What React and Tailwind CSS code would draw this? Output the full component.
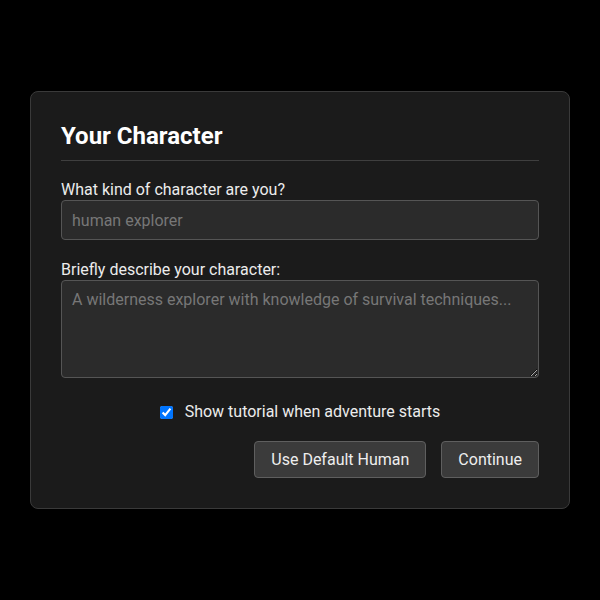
import React, { useState } from 'react';

const App = () => {
  const [tipo, setTipo] = useState('');
  const [descricao, setDescricao] = useState('');
  const [tutorial, setTutorial] = useState(true);

  return (
    <div
      className="min-h-screen bg-black flex items-center justify-center"
      style={{ fontFamily: 'Roboto, "Liberation Sans", sans-serif' }}
    >
      <div className="w-[540px] bg-[#1b1b1b] border border-[#3a3a3a] rounded-lg p-[30px]">
        {/* Cabeçalho */}
        <h2 className="text-2xl leading-[29px] font-bold text-white pb-[9px] border-b border-[#3f3f3f]">
          Your Character
        </h2>

        <div className="mt-[19px]">
          <label className="block text-base leading-5 text-[#ececec]">
            What kind of character are you?
          </label>
          <input
            type="text"
            value={tipo}
            onChange={(e) => setTipo(e.target.value)}
            placeholder="human explorer"
            className="block w-full h-10 px-2.5 bg-[#2b2b2b] border border-[#555] rounded text-base text-[#eee] placeholder:text-[#777] outline-none"
          />
        </div>

        <div className="mt-5">
          <label className="block text-base leading-5 text-[#ececec]">
            Briefly describe your character:
          </label>
          <textarea
            value={descricao}
            onChange={(e) => setDescricao(e.target.value)}
            placeholder="A wilderness explorer with knowledge of survival techniques..."
            className="block w-full h-[98px] px-2.5 py-[7px] bg-[#2b2b2b] border border-[#555] rounded text-base leading-6 text-[#eee] placeholder:text-[#777] outline-none"
          />
        </div>

        {/* Tutorial */}
        <label className="mt-[22px] flex items-center justify-center gap-3 text-base leading-6 text-[#ececec]">
          <input
            type="checkbox"
            checked={tutorial}
            onChange={(e) => setTutorial(e.target.checked)}
            className="w-[13px] h-[13px]"
          />
          Show tutorial when adventure starts
        </label>

        {/* Botões */}
        <div className="mt-[17px] flex justify-end gap-[15px]">
          <button className="h-[37px] px-4 bg-[#3b3b3b] border border-[#5f5f5f] rounded text-base text-[#eee]">
            Use Default Human
          </button>
          <button className="h-[37px] px-4 bg-[#3b3b3b] border border-[#5f5f5f] rounded text-base text-[#eee]">
            Continue
          </button>
        </div>
      </div>
    </div>
  );
};

export default App;
